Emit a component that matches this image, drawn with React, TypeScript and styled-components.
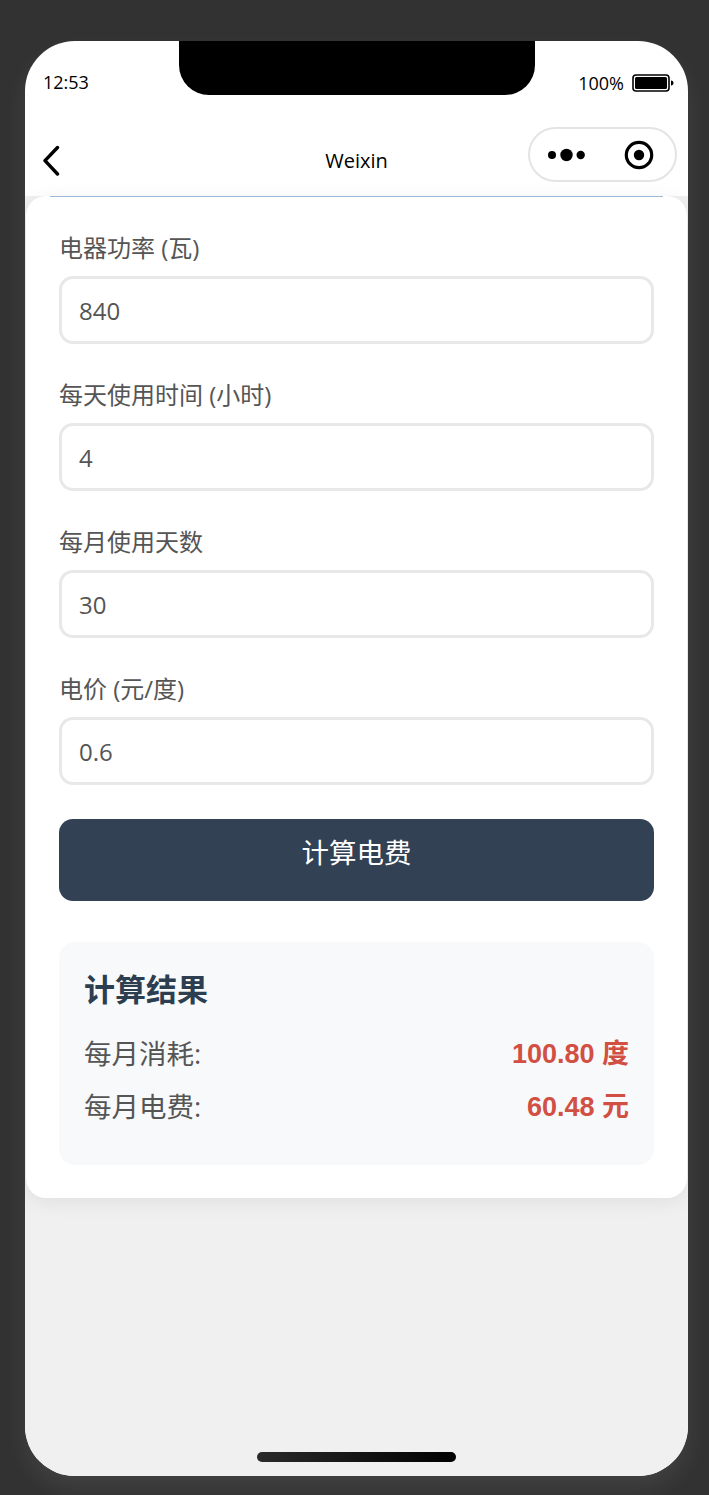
import React from "react";
import styled, { createGlobalStyle } from "styled-components";

const FIELDS = [
  { label: "电器功率 (瓦)", value: "840" },
  { label: "每天使用时间 (小时)", value: "4" },
  { label: "每月使用天数", value: "30" },
  { label: "电价 (元/度)", value: "0.6" },
];

const RESULTS = [
  { label: "每月消耗:", value: "100.80 度" },
  { label: "每月电费:", value: "60.48 元" },
];

const App = () => {
  return (
    <>
      <GlobalStyle />
      <Phone>
        <Notch />
        <StatusBar>
          <Clock>12:53</Clock>
          <BatteryGroup>
            <span>100%</span>
            <svg width="42" height="18" viewBox="0 0 42 18">
              <rect x="1" y="1" width="36" height="16" rx="3" fill="#fff" stroke="#000" strokeWidth="1.6" />
              <rect x="3" y="3" width="32" height="12" rx="1.5" fill="#000" />
              <path d="M39 6.5c1.6.2 2.5 1.2 2.5 2.5s-.9 2.3-2.5 2.5z" fill="#000" />
            </svg>
          </BatteryGroup>
        </StatusBar>
        <NavBar>
          <BackButton>
            <svg width="20" height="32" viewBox="0 0 20 32">
              <path d="M14.5 2.5 2 15.7 14.5 29" fill="none" stroke="#000" strokeWidth="3.4" strokeLinecap="round" strokeLinejoin="round" />
            </svg>
          </BackButton>
          <NavTitle>Weixin</NavTitle>
          <Capsule>
            <svg width="37" height="16" viewBox="0 0 37 16">
              <circle cx="4" cy="8" r="4" fill="#000" />
              <circle cx="18.5" cy="8" r="6.2" fill="#000" />
              <circle cx="32.7" cy="8" r="4.2" fill="#000" />
            </svg>
            <svg width="30" height="30" viewBox="0 0 30 30">
              <circle cx="15" cy="15" r="12.7" fill="none" stroke="#000" strokeWidth="3.2" />
              <circle cx="15" cy="15" r="5.2" fill="#000" />
            </svg>
          </Capsule>
        </NavBar>
        <Page>
          <TopRule />
          <Card>
            {FIELDS.map((field) => (
              <Field key={field.label}>
                <FieldLabel>{field.label}</FieldLabel>
                <FieldInput defaultValue={field.value} />
              </Field>
            ))}
            <CalcButton>计算电费</CalcButton>
            <ResultBox>
              <ResultTitle>计算结果</ResultTitle>
              {RESULTS.map((row) => (
                <ResultRow key={row.label}>
                  <ResultLabel>{row.label}</ResultLabel>
                  <ResultValue>{row.value}</ResultValue>
                </ResultRow>
              ))}
            </ResultBox>
          </Card>
          <HomeIndicator />
        </Page>
      </Phone>
    </>
  );
};

export default App;

const GlobalStyle = createGlobalStyle`
  html, body {
    margin: 0;
    padding: 0;
    background: #323232;
  }
  * {
    box-sizing: border-box;
  }
`;

const Phone = styled.div`
  position: relative;
  display: flex;
  flex-direction: column;
  width: 663px;
  height: 1435px;
  margin: 41px 0 19px 25px;
  border-radius: 50px;
  background: #ffffff;
  overflow: hidden;
  box-shadow: 0 12px 24px rgba(255, 255, 255, 0.08);
  font-family: "Open Sans", "Noto Sans CJK SC", sans-serif;
`;

const Notch = styled.div`
  position: absolute;
  top: 0;
  left: 154px;
  width: 356px;
  height: 54px;
  background: #000;
  border-radius: 0 0 30px 30px;
`;

const StatusBar = styled.div`
  display: flex;
  align-items: center;
  justify-content: space-between;
  height: 84px;
  padding: 0 14px 0 18px;
  color: #000;
  font-size: 18px;
`;

const Clock = styled.span`
  margin-bottom: 2px;
`;

const BatteryGroup = styled.div`
  display: flex;
  align-items: center;
  gap: 8px;
`;

const NavBar = styled.div`
  position: relative;
  display: flex;
  align-items: center;
  justify-content: space-between;
  height: 71px;
  padding: 0 11px 0 18px;
`;

const BackButton = styled.div`
  display: flex;
  margin-top: 1px;
`;

const NavTitle = styled.div`
  position: absolute;
  left: 0;
  right: 0;
  text-align: center;
  color: #000;
  font-size: 20px;
`;

const Capsule = styled.div`
  display: flex;
  align-items: center;
  justify-content: space-between;
  width: 149px;
  height: 55px;
  padding: 0 21px 0 18px;
  margin-bottom: 12px;
  border: 2px solid #e4e4e4;
  border-radius: 28px;
  background: #fff;
`;

const Page = styled.div`
  position: relative;
  flex: 1;
  display: flex;
  flex-direction: column;
  background: #f0f0f0;
`;

const TopRule = styled.div`
  position: absolute;
  top: 0;
  left: 25px;
  right: 25px;
  height: 1px;
  background: #9db9d8;
  z-index: 1;
`;

const Card = styled.div`
  display: flex;
  flex-direction: column;
  height: 1002px;
  margin: 0 1px;
  padding: 36px 33px 0;
  background: #fff;
  border-radius: 20px;
  box-shadow: 0 4px 20px rgba(0, 0, 0, 0.07);
`;

const Field = styled.div`
  display: flex;
  flex-direction: column;
  gap: 12px;
  margin-bottom: 35px;
`;

const FieldLabel = styled.label`
  height: 32px;
  line-height: 32px;
  color: #555;
  font-size: 24px;
`;

const FieldInput = styled.input`
  width: 100%;
  height: 68px;
  padding: 0 17px;
  border: 3px solid #e8e8e8;
  border-radius: 14px;
  background: #fff;
  color: #555;
  font-family: inherit;
  font-size: 24px;
  outline: none;
`;

const CalcButton = styled.button`
  display: block;
  width: 100%;
  height: 82px;
  margin-top: -1px;
  padding: 0 0 18px;
  border: 0;
  border-radius: 14px;
  background: #334155;
  color: #fff;
  font-family: inherit;
  font-size: 27.5px;
`;

const ResultBox = styled.div`
  display: flex;
  flex-direction: column;
  height: 223px;
  margin-top: 41px;
  padding: 25px 25px 0;
  background: #f8f9fa;
  border-radius: 16px;
`;

const ResultTitle = styled.div`
  height: 45px;
  line-height: 45px;
  margin-bottom: 13px;
  color: #2c3e50;
  font-size: 31px;
  font-weight: 700;
`;

const ResultRow = styled.div`
  display: flex;
  align-items: center;
  justify-content: space-between;
  height: 53px;
`;

const ResultLabel = styled.span`
  color: #555;
  font-size: 27.5px;
`;

const ResultValue = styled.span`
  color: #d14f43;
  font-family: "Liberation Sans", "Noto Sans CJK SC", sans-serif;
  font-size: 27px;
  font-weight: 700;
`;

const HomeIndicator = styled.div`
  position: absolute;
  left: 232px;
  bottom: 14px;
  width: 199px;
  height: 10px;
  border-radius: 5px;
  background: linear-gradient(90deg, #2a2a2a, #000);
`;
